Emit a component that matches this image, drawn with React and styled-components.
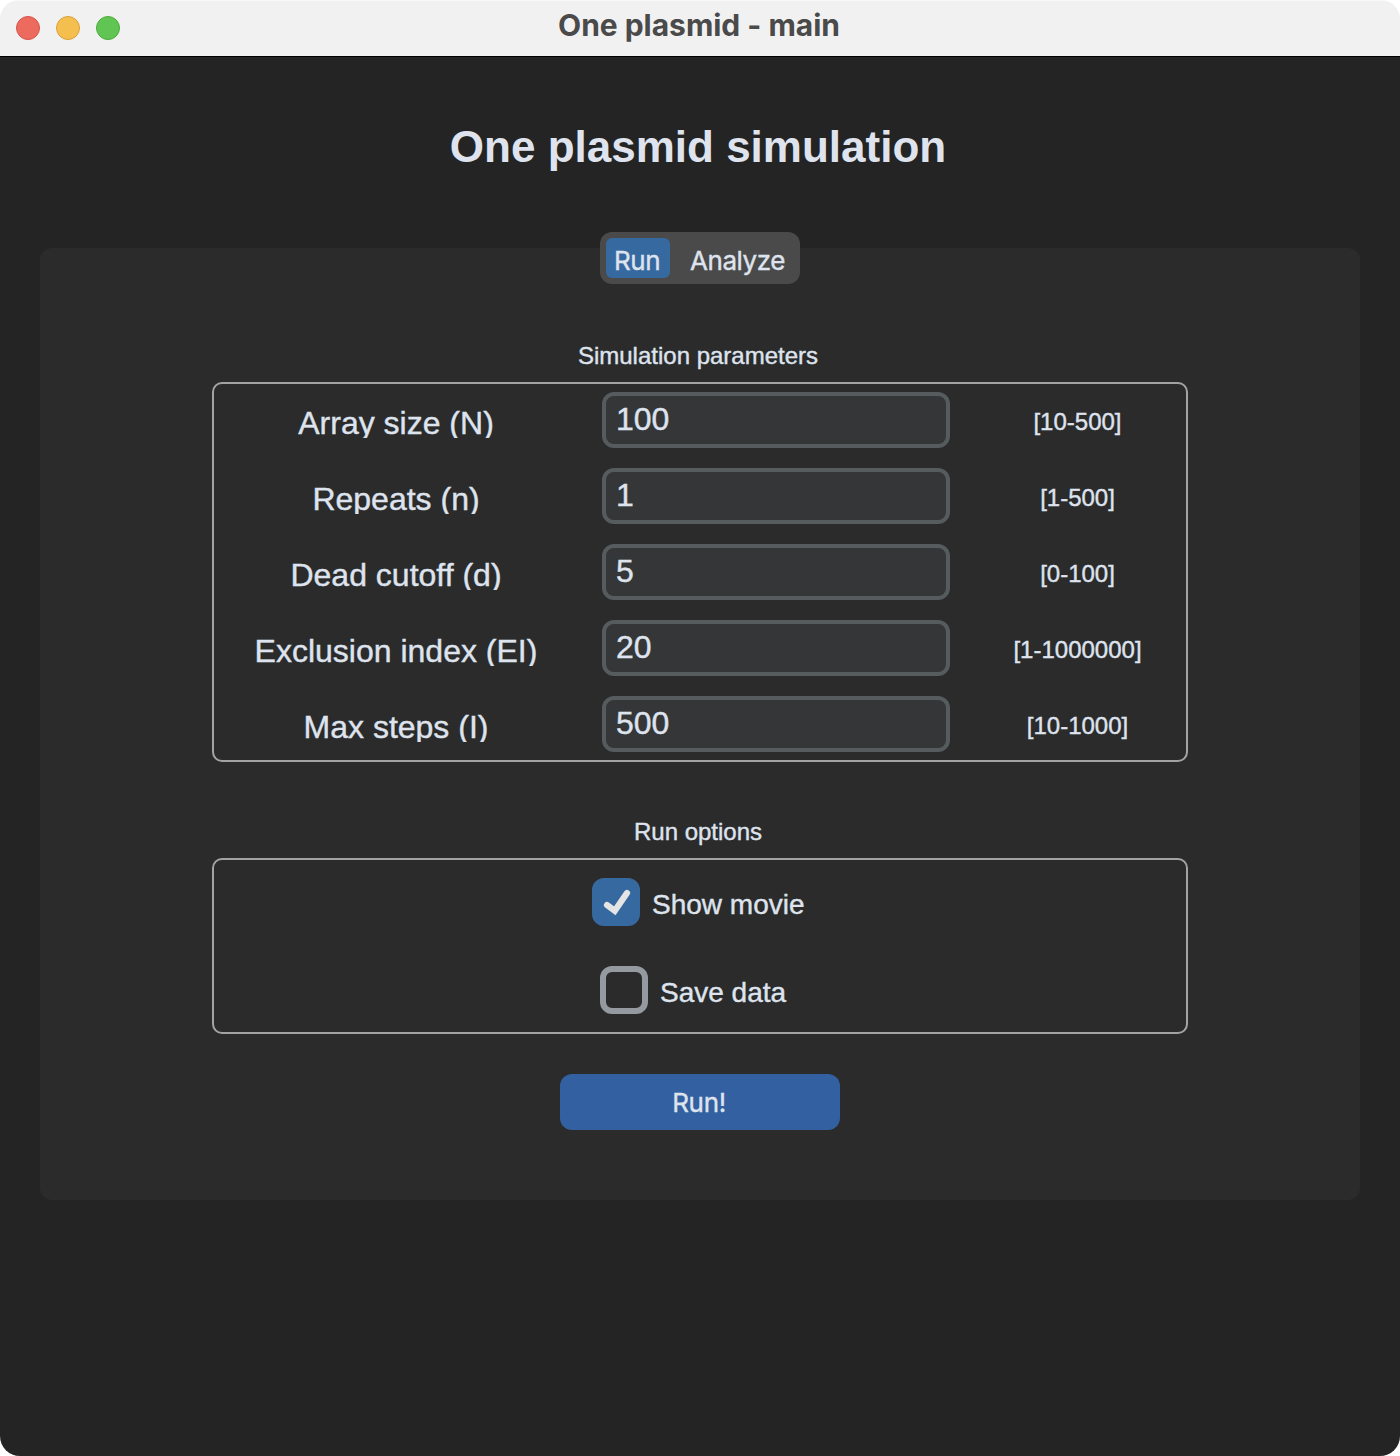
import React, { useState } from "react";
import styled, { createGlobalStyle } from "styled-components";

const GlobalStyle = createGlobalStyle`
  * { box-sizing: border-box; }
  body { margin: 0; background: #fff; }
`;

const arial = `"Liberation Sans", Arial, sans-serif`;
const system = `Inter, "Liberation Sans", sans-serif`;
const ink = "#dee3ee";

const Window = styled.main`
  width: 1400px;
  height: 1456px;
  display: flex;
  flex-direction: column;
  overflow: hidden;
  border-radius: 20px;
  background: linear-gradient(#f1f1f1 56px, #242424 56px);
  color: ${ink};
  font-family: ${arial};
  -webkit-text-stroke: 0.4px;
`;

const TitleBar = styled.header`
  height: 57px;
  flex: none;
  display: grid;
  grid-template-columns: 1fr auto 1fr;
  padding: 0 16px;
  background: #f1f1f1;
  box-shadow: inset 0 1px #f9f9f9;
  border-bottom: 1px solid #000;
`;

const Lights = styled.div`
  display: flex;
  gap: 16px;
  padding-top: 16px;
`;

const Light = styled.span`
  width: 24px;
  height: 24px;
  border-radius: 50%;
  background: ${(p) => p.$fill};
  border: 1px solid ${(p) => p.$edge};
`;

const WindowTitle = styled.div`
  padding: 7px 2px 0 0;
  font: 700 30px/36px ${system};
  letter-spacing: -0.02px;
  color: #4a4a4a;
  white-space: nowrap;
  -webkit-text-stroke: 0;
`;

const Heading = styled.h1`
  margin: 65px 4px 0 0;
  font-size: 44px;
  line-height: 50px;
  font-weight: 700;
  text-align: center;
  -webkit-text-stroke: 0;
`;

const TabView = styled.section`
  height: 952px;
  margin: 76px 40px 0;
  border-radius: 12px;
  background: #2b2b2b;
  display: flex;
  flex-direction: column;
  align-items: center;
`;

const Tabs = styled.nav`
  display: flex;
  width: 200px;
  height: 52px;
  margin-top: -16px;
  padding: 6px;
  border-radius: 12px;
  background: #4a4a4a;
`;

const Tab = styled.button`
  width: ${(p) => p.$width}px;
  height: 40px;
  padding: 5px 0 0 ${(p) => p.$inset}px;
  border: 0;
  border-radius: 6px;
  background: ${(p) => (p.$active ? "#36699f" : "transparent")};
  color: ${ink};
  font: 400 26px/34px ${system};
  letter-spacing: ${(p) => p.$tracking}px;
  text-align: left;
  white-space: nowrap;
`;

const Caption = styled.h2`
  margin: ${(p) => p.$top}px 4px 0 0;
  height: 28px;
  font-size: 24px;
  line-height: 28px;
  font-weight: 400;
`;

const Group = styled.div`
  width: 976px;
  height: ${(p) => p.$height}px;
  margin-top: 12px;
  border: 2px solid #a3a3a3;
  border-radius: 10px;
`;

const ParameterList = styled(Group)`
  display: flex;
  flex-direction: column;
  gap: 20px;
  padding: 8px 0;
`;

const ParameterRow = styled.label`
  display: grid;
  grid-template-columns: 364px 348px 216px;
  column-gap: 24px;
  height: 56px;
`;

const ParameterName = styled.span`
  height: 33px;
  margin-top: 13px;
  overflow: hidden;
  font-size: 32px;
  line-height: 36px;
  text-align: center;
`;

const Entry = styled.input`
  width: 348px;
  height: 56px;
  padding: 0 10px 2px;
  border: 4px solid #565b5e;
  border-radius: 12px;
  outline: none;
  background: #343638;
  color: ${ink};
  font: 32px/36px ${arial};
`;

const Range = styled.span`
  margin-top: 16px;
  padding-right: 9px;
  font-size: 24px;
  line-height: 28px;
  text-align: center;
`;

const OptionList = styled(Group)`
  display: flex;
  flex-direction: column;
  align-items: center;
  gap: 40px;
  padding-top: 18px;
`;

const OptionRow = styled.label`
  display: flex;
  gap: 12px;
  width: ${(p) => p.$width}px;
  height: 48px;
  white-space: nowrap;
`;

const CheckBox = styled.span`
  flex: none;
  width: 48px;
  height: 48px;
  border-radius: 12px;
  border: 6px solid ${(p) => (p.$checked ? "#36699f" : "#949a9f")};
  background: ${(p) => (p.$checked ? "#36699f" : "transparent")};

  svg { display: block; margin: -6px; }
`;

const OptionText = styled.span`
  padding-top: 11px;
  font-size: 28px;
  line-height: 32px;
`;

const RunButton = styled.button`
  width: 280px;
  height: 56px;
  margin-top: 40px;
  padding: 2px 2px 0 0;
  border: 0;
  border-radius: 12px;
  background: #3260a0;
  color: ${ink};
  font: 400 26px/34px ${system};
  letter-spacing: -0.3px;
`;

const parameters = [
  ["Array size (N)", "100", "[10-500]"],
  ["Repeats (n)", "1", "[1-500]"],
  ["Dead cutoff (d)", "5", "[0-100]"],
  ["Exclusion index (EI)", "20", "[1-1000000]"],
  ["Max steps (I)", "500", "[10-1000]"],
];

function Option({ text, width, initial }) {
  const [checked, setChecked] = useState(initial);
  return (
    <OptionRow $width={width} onClick={() => setChecked(!checked)}>
      <CheckBox $checked={checked}>
        {checked && (
          <svg width="48" height="48" viewBox="0 0 48 48" fill="none">
            <path d="M15 27L22.8 32.8L35 15" stroke="#e5e5e5" strokeWidth="6.2" strokeLinecap="round" />
          </svg>
        )}
      </CheckBox>
      <OptionText>{text}</OptionText>
    </OptionRow>
  );
}

export default function App() {
  return (
    <>
      <GlobalStyle />
      <Window>
        <TitleBar>
          <Lights>
            <Light $fill="#ec6a5e" $edge="#d5554b" />
            <Light $fill="#f4bf4f" $edge="#d9a13b" />
            <Light $fill="#61c554" $edge="#4fa93e" />
          </Lights>
          <WindowTitle>One plasmid - main</WindowTitle>
        </TitleBar>
        <Heading>One plasmid simulation</Heading>
        <TabView>
          <Tabs>
            <Tab $active $width={64} $inset={8} $tracking={-0.4}>Run</Tab>
            <Tab $width={124} $inset={20} $tracking={-0.45}>Analyze</Tab>
          </Tabs>
          <Caption $top={58}>Simulation parameters</Caption>
          <ParameterList $height={380}>
            {parameters.map(([name, value, range]) => (
              <ParameterRow key={name}>
                <ParameterName>{name}</ParameterName>
                <Entry defaultValue={value} />
                <Range>{range}</Range>
              </ParameterRow>
            ))}
          </ParameterList>
          <Caption $top={56}>Run options</Caption>
          <OptionList $height={176}>
            <Option text="Show movie" width={216} initial />
            <Option text="Save data" width={200} initial={false} />
          </OptionList>
          <RunButton>Run!</RunButton>
        </TabView>
      </Window>
    </>
  );
}
